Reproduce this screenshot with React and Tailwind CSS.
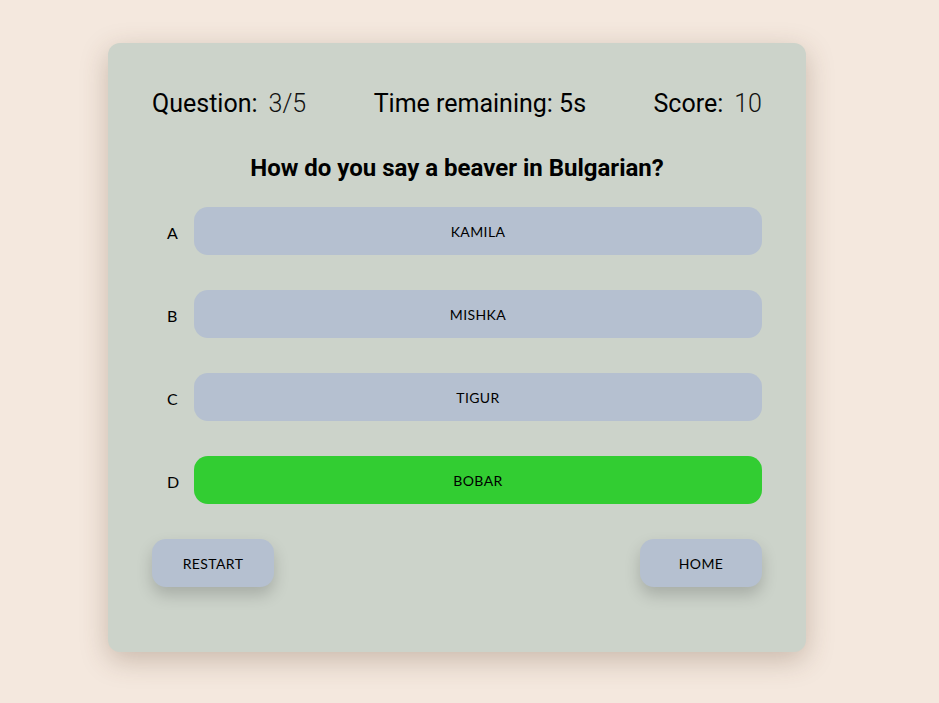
import React from "react";

const options = [
  { letter: "A", text: "KAMILA", correct: false },
  { letter: "B", text: "MISHKA", correct: false },
  { letter: "C", text: "TIGUR", correct: false },
  { letter: "D", text: "BOBAR", correct: true },
];

export default function App() {
  return (
    <div className="min-h-[703px] w-full bg-[#f4e8de] pt-[43px]">
      <div className="ml-[108px] w-[698px] h-[609px] rounded-[12px] bg-[#ccd3ca] shadow-[0_8px_28px_rgba(90,60,40,0.28)] px-[44px] pt-[45px] pb-[65px]">
        <div className="flex items-center justify-between h-[32px] text-[25px] text-black font-['Roboto',sans-serif] leading-[32px]">
          <div>
            Question:<span className="ml-[11px] font-light text-[#111]">3/5</span>
          </div>
          <div>Time remaining: 5s</div>
          <div>
            Score:<span className="ml-[11px] font-light text-[#111]">10</span>
          </div>
        </div>
        <div className="mt-[33px] h-[30px] leading-[30px] text-center text-[24px] font-bold font-['Roboto',sans-serif] text-black">
          How do you say a beaver in Bulgarian?
        </div>
        <div className="mt-[24px] flex flex-col gap-[35px]">
          {options.map((o) => (
            <div key={o.letter} className="flex items-center h-[48px]">
              <div className="w-[42px] pl-[15px] pt-[3px] text-[16px] font-['Lato',sans-serif] text-black">
                {o.letter}
              </div>
              <button
                className={
                  "flex-1 h-[48px] rounded-[14px] flex items-center justify-center text-[14px] font-['Lato',sans-serif] text-black tracking-[0.4px] " +
                  (o.correct ? "bg-[#32cd32]" : "bg-[#b5c0d0]")
                }
              >
                {o.text}
              </button>
            </div>
          ))}
        </div>
        <div className="mt-[35px] flex justify-between">
          <button className="w-[122px] h-[48px] rounded-[14px] bg-[#b5c0d0] text-[14px] font-['Lato',sans-serif] tracking-[0.4px] text-black shadow-[0_8px_16px_rgba(0,0,0,0.18)]">
            RESTART
          </button>
          <button className="w-[122px] h-[48px] rounded-[14px] bg-[#b5c0d0] text-[14px] font-['Lato',sans-serif] tracking-[0.4px] text-black shadow-[0_8px_16px_rgba(0,0,0,0.18)]">
            HOME
          </button>
        </div>
      </div>
    </div>
  );
}
